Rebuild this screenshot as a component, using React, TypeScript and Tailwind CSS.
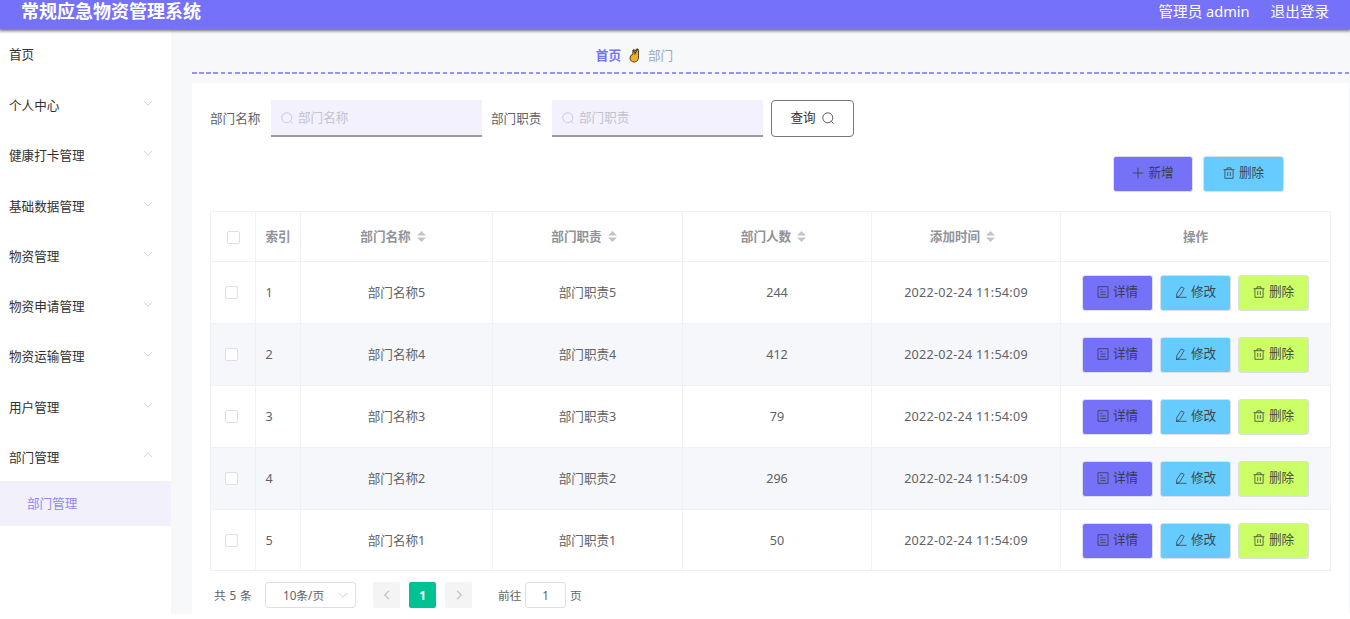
import type { ReactNode } from "react";

const menus = [
  "个人中心",
  "健康打卡管理",
  "基础数据管理",
  "物资管理",
  "物资申请管理",
  "物资运输管理",
  "用户管理",
  "部门管理",
];

const rows = [
  { id: 1, name: "部门名称5", duty: "部门职责5", count: 244, time: "2022-02-24 11:54:09" },
  { id: 2, name: "部门名称4", duty: "部门职责4", count: 412, time: "2022-02-24 11:54:09" },
  { id: 3, name: "部门名称3", duty: "部门职责3", count: 79, time: "2022-02-24 11:54:09" },
  { id: 4, name: "部门名称2", duty: "部门职责2", count: 296, time: "2022-02-24 11:54:09" },
  { id: 5, name: "部门名称1", duty: "部门职责1", count: 50, time: "2022-02-24 11:54:09" },
];

const columns = ["部门名称", "部门职责", "部门人数", "添加时间"];

const gridCols = "grid grid-cols-[45px_45px_192px_190px_189px_189px_270px]";
const cell = "flex items-center justify-center border-r border-b border-[#eff1f7]";

function Icon({ children, className = "size-3" }: { children: ReactNode; className?: string }) {
  return (
    <svg
      viewBox="0 0 12 12"
      fill="none"
      stroke="currentColor"
      strokeWidth="0.8"
      className={`shrink-0 ${className}`}
    >
      {children}
    </svg>
  );
}

function SearchIcon() {
  return (
    <Icon>
      <circle cx="5.8" cy="5.8" r="5" />
      <path d="M9.3 9.3l2.2 2.2" />
    </Icon>
  );
}

function TrashIcon() {
  return (
    <Icon>
      <path d="M.5 2.7h11M4 2.7V.9h4v1.8M1.9 2.7v8.6h8.2V2.7M4.7 5v4M7.3 5v4" />
    </Icon>
  );
}

function DetailIcon() {
  return (
    <Icon>
      <path d="M1 .7h10v10.6H1zM3.3 3.4h2.2M3.3 6h5.4M3.3 8.6h5.4" />
    </Icon>
  );
}

function EditIcon() {
  return (
    <Icon>
      <path d="M6.3.9l2.9 1.5-4.1 7.1-3.6 2 .3-3.9zM1.5 11.5l4-.2h6" />
    </Icon>
  );
}

function PlusIcon() {
  return (
    <Icon>
      <path d="M6 .6v10.8M.6 6h10.8" />
    </Icon>
  );
}

function Arrow({ dir, className }: { dir: "up" | "down" | "left" | "right"; className?: string }) {
  const paths = {
    up: "M1.8 8L6 3.8 10.2 8",
    down: "M1.8 4L6 8.2 10.2 4",
    left: "M8 1.8L3.8 6 8 10.2",
    right: "M4 1.8L8.2 6 4 10.2",
  };
  return (
    <Icon className={className}>
      <path d={paths[dir]} />
    </Icon>
  );
}

function CrossedFingers() {
  return (
    <svg viewBox="0 0 11 15" className="h-[15px] w-[11px]">
      <path
        d="M3.9 6.2L3.9 2.2Q4.4.8 5.7 2.1L6.3 3 7.5 1Q9.5.4 9.6 2.4L9.5 7.4Q10 13.8 5.4 14 1 13.8 1 9.8 1.2 6.8 3.9 6.2z"
        fill="#f2ae22"
        stroke="#4b3d26"
        strokeWidth="1"
      />
      <path d="M4 2l2.2 3L8.7 1.2M6.2 5l-.3 1.6" fill="none" stroke="#4b3d26" strokeWidth="1.2" />
    </svg>
  );
}

function Checkbox({ className = "" }: { className?: string }) {
  return <span className={`block size-[13px] rounded-xs border border-[#dcdfe6] bg-white ${className}`} />;
}

function Sort() {
  return (
    <svg viewBox="0 0 9 11" className="ml-1.5 h-[11px] w-[9px]" fill="#c0c4cc">
      <path d="M4.5 0L9 4.5H0zM4.5 11L9 6.5H0z" />
    </svg>
  );
}

function Button({ className, icon, children }: { className: string; icon: ReactNode; children: ReactNode }) {
  return (
    <button
      className={`flex h-9 items-center justify-center gap-1 rounded-[3px] border border-[#dcdfe6] pb-0.5 text-[#333]/90 ${className}`}
    >
      {icon}
      <span>{children}</span>
    </button>
  );
}

function SearchField({ label, className = "" }: { label: string; className?: string }) {
  return (
    <label className={`flex items-center ${className}`}>
      <span className="w-[61px] pt-px text-[#606266]">{label}</span>
      <span className="flex h-[37px] w-[211px] items-center gap-[5px] border-b-2 border-[#9b9a9f] bg-[#f3f1fe] pl-[10px] text-[#c0c4cc]">
        <SearchIcon />
        {label}
      </span>
    </label>
  );
}

export default function App() {
  return (
    <div className="h-[619px] w-[1350px] overflow-hidden bg-white font-['Noto_Sans','Noto_Sans_CJK_SC',sans-serif] text-[12.6px] leading-5 text-[#606266]">
      <header className="relative z-10 flex h-[29px] items-center justify-between bg-[#7571f9] pr-[21px] pb-[8px] pl-[21px] text-white shadow-[0_1px_3px_1px_rgba(0,0,0,0.55)]">
        <h1 className="text-[18px] leading-6 font-bold">常规应急物资管理系统</h1>
        <div className="flex gap-[21px] text-[14.6px]">
          <span>管理员 admin</span>
          <span>退出登录</span>
        </div>
      </header>

      <div className="flex h-[585px]">
        <aside className="w-[171px] shrink-0 text-[#303133]">
          <div className="flex h-[50px] items-center pt-px pl-[9px]">首页</div>
          {menus.map((menu, i) => (
            <div key={menu} className="flex h-[50.25px] items-center justify-between pt-[4px] pr-[17px] pl-[9px]">
              {menu}
              <Arrow dir={i === menus.length - 1 ? "up" : "down"} className="mb-[6px] size-3 text-[#c0c4cc]" />
            </div>
          ))}
          <div className="flex h-[45px] items-center bg-[#f2f0fb] pl-[27px] text-[#8e8af9]">部门管理</div>
        </aside>

        <main className="flex-1 bg-[#f6f8fa] pr-px pl-[21px]">
          <nav className="flex h-[43px] items-center justify-center gap-2 pt-[10px] pr-[272px]">
            <span className="font-bold text-[#7571f9]">首页</span>
            <CrossedFingers />
            <span className="text-[#97a8be]">部门</span>
          </nav>
          <div className="-mr-px h-0.5 bg-[repeating-linear-gradient(90deg,#9693f6_0_4.6px,transparent_4.6px_7.16px)]" />

          <section className="mt-[9px] h-[531px] bg-white px-[18px] pt-[17px]">
            <div className="flex items-center">
              <SearchField label="部门名称" />
              <SearchField label="部门职责" className="ml-[9px]" />
              <button className="ml-2 flex h-[37px] w-[83px] items-center justify-center gap-1.5 rounded-[4px] border border-[#77777a] bg-white pr-px pb-0.5 text-[#333]">
                查询
                <SearchIcon />
              </button>
            </div>

            <div className="mt-[19px] flex justify-end gap-[10px] pr-[47px]">
              <Button className="w-20 bg-[#7571f9]" icon={<PlusIcon />}>新增</Button>
              <Button className="w-[81px] bg-[#66ccff]" icon={<TrashIcon />}>删除</Button>
            </div>

            <div className="mt-[19px] w-[1121px] border-t border-l border-[#eff1f7]">
              <div className={`${gridCols} h-[50px] font-bold text-[#909399]`}>
                <div className={cell}>
                  <Checkbox className="mt-0.5" />
                </div>
                <div className={cell}>索引</div>
                {columns.map((col) => (
                  <div key={col} className={`${cell} pr-[7px]`}>
                    {col}
                    <Sort />
                  </div>
                ))}
                <div className={cell}>操作</div>
              </div>
              {rows.map((row) => (
                <div
                  key={row.id}
                  className={`${gridCols} h-[61.9px] ${row.id % 2 === 0 ? "bg-[#f5f7fa]" : "bg-white"}`}
                >
                  <div className={cell}>
                    <Checkbox className="mt-px mr-[3px]" />
                  </div>
                  <div className={`${cell} pt-0.5 pr-[18px]`}>{row.id}</div>
                  <div className={`${cell} pt-0.5`}>{row.name}</div>
                  <div className={`${cell} pt-0.5`}>{row.duty}</div>
                  <div className={`${cell} pt-0.5`}>{row.count}</div>
                  <div className={`${cell} pt-0.5 tracking-[0.25px]`}>{row.time}</div>
                  <div className={`${cell} gap-[7px] pt-[2px]`}>
                    <Button className="w-[71px] bg-[#7571f9]" icon={<DetailIcon />}>详情</Button>
                    <Button className="w-[71px] bg-[#66ccff]" icon={<EditIcon />}>修改</Button>
                    <Button className="w-[71px] bg-[#ccff66]" icon={<TrashIcon />}>删除</Button>
                  </div>
                </div>
              ))}
            </div>

            <div className="mt-[11px] flex items-center pl-1 text-[11.7px]">
              <span className="w-[51px] tracking-[0.4px]">共 5 条</span>
              <div className="flex h-[26px] w-[91px] items-center rounded-[3px] border border-[#dcdfe6] pl-[17px]">
                10条/页
                <Arrow dir="down" className="mr-1.5 ml-auto size-3 text-[#c0c4cc]" />
              </div>
              <span className="ml-[17px] flex h-[26px] w-[27px] items-center justify-center rounded-xs bg-[#f4f4f5] text-[#c0c4cc]">
                <Arrow dir="left" className="size-3 stroke-[1.3]" />
              </span>
              <span className="ml-[9px] flex h-[26px] w-[27px] items-center justify-center rounded-xs bg-[#00c292] font-bold text-white">
                1
              </span>
              <span className="ml-[9px] flex h-[26px] w-[27px] items-center justify-center rounded-xs bg-[#f4f4f5] text-[#c0c4cc]">
                <Arrow dir="right" className="size-3 stroke-[1.3]" />
              </span>
              <span className="ml-[26px] w-[27px]">前往</span>
              <span className="flex h-[26px] w-[41px] items-center justify-center rounded-[3px] border border-[#dcdfe6]">1</span>
              <span className="ml-1">页</span>
            </div>
          </section>
        </main>
      </div>
    </div>
  );
}
